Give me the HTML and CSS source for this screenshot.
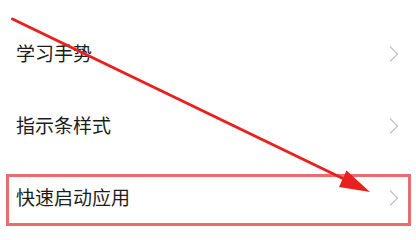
FILE: index.html
```html
<!DOCTYPE html>
<html lang="zh-CN">
<head>
<meta charset="utf-8">
<title>设置</title>
<link rel="stylesheet" href="styles.css">
</head>
<body>
<div class="screen">
  <div class="list">
    <div class="row">
      <span class="label">学习手势</span>
      <svg class="chev" viewBox="0 0 10 16" width="10" height="16"><polyline points="1.5,1 8.5,8 1.5,15"/></svg>
    </div>
    <div class="row">
      <span class="label">指示条样式</span>
      <svg class="chev" viewBox="0 0 10 16" width="10" height="16"><polyline points="1.5,1 8.5,8 1.5,15"/></svg>
    </div>
    <div class="row">
      <span class="label">快速启动应用</span>
      <svg class="chev" viewBox="0 0 10 16" width="10" height="16"><polyline points="1.5,1 8.5,8 1.5,15"/></svg>
    </div>
  </div>
  <div class="highlight"></div>
  <svg class="annot" viewBox="0 0 416 237" width="416" height="237">
    <line x1="12.5" y1="19" x2="346" y2="180" class="arrow-line"/>
    <polygon points="370,192 346.5,170.5 339,187" class="arrow-head"/>
  </svg>
</div>
</body>
</html>
```

FILE: styles.css
```css
html, body {
  margin: 0;
  padding: 0;
  background: #ffffff;
}

.screen {
  position: relative;
  width: 416px;
  height: 237px;
  overflow: hidden;
  background: #ffffff;
  font-family: "Noto Sans CJK SC", "Noto Sans", sans-serif;
}

.list {
  display: flex;
  flex-direction: column;
  padding-top: 17.5px;
}

.row {
  height: 72px;
  display: flex;
  align-items: center;
  justify-content: space-between;
  padding: 0 17px 0 16px;
}

.label {
  font-size: 19px;
  line-height: 1.2;
  color: #1c1c1c;
}

.chev {
  display: block;
}

.chev polyline {
  fill: none;
  stroke: #c6c6c6;
  stroke-width: 1.4;
  stroke-linecap: round;
  stroke-linejoin: round;
}

.highlight {
  position: absolute;
  left: 6px;
  top: 174px;
  width: 399px;
  height: 46px;
  border: 3px solid #ec6b6d;
}

.annot {
  position: absolute;
  left: 0;
  top: 0;
  pointer-events: none;
}

.arrow-line {
  stroke: #e8211f;
  stroke-width: 3;
  stroke-linecap: round;
}

.arrow-head {
  fill: #e8211f;
}
```
